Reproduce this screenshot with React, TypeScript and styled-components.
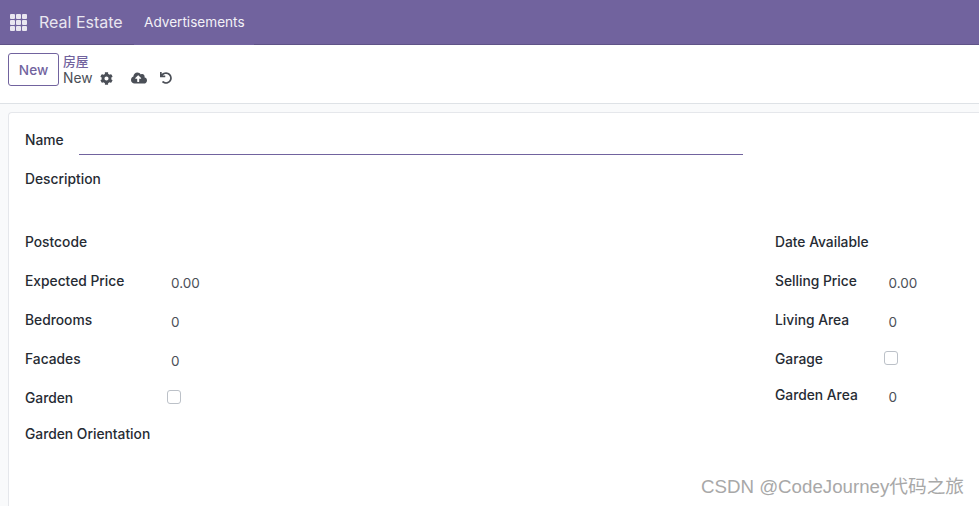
import React from "react";
import styled, { createGlobalStyle } from "styled-components";
import { FaCog, FaCloudUploadAlt, FaUndo } from "react-icons/fa";

const Global = createGlobalStyle`
  html, body { margin: 0; padding: 0; height: 100%; background: #fff; }
  #root { height: 100%; }
  * { box-sizing: border-box; }
  body { font-family: Inter, "Liberation Sans", "Noto Sans CJK SC", sans-serif; color: #374151; overflow: hidden; }
`;

const Page = styled.div`
  width: 979px;
  height: 506px;
  position: relative;
  overflow: hidden;
  display: flex;
  flex-direction: column;
  background: #f9fafb;
`;

const NavBar = styled.header`
  height: 45px;
  flex: none;
  background: #71639e;
  border-bottom: 1px solid #5f5387;
  display: flex;
  align-items: center;
  padding-left: 10px;
  color: #fff;
`;

const AppsGrid = styled.span`
  width: 17px;
  height: 17px;
  display: grid;
  grid-template-columns: repeat(3, 5px);
  grid-auto-rows: 5px;
  gap: 1px;
  i { background: #e9e6f0; border-radius: 1px; }
`;

const Brand = styled.span`
  margin-left: 12px;
  font-size: 16px;
  color: #e9e6f0;
  width: 95px;
`;

const MenuItem = styled.span`
  height: 45px;
  align-self: flex-start;
  width: 120px;
  padding-left: 10px;
  display: flex;
  align-items: center;
  padding-bottom: 1px;
  font-size: 13.6px;
  color: #f3f1f7;
  background: #71639e;
`;

const ControlPanel = styled.section`
  height: 59px;
  flex: none;
  background: #fff;
  border-bottom: 1px solid #dee2e6;
  display: flex;
  padding: 8px 0 0 8px;
`;

const NewButton = styled.button`
  width: 51px;
  height: 33px;
  border: 1px solid #71639e;
  border-radius: 3px;
  background: #fff;
  color: #71639e;
  font: 500 13.6px Inter, "Liberation Sans", sans-serif;
  padding: 0;
`;

const Crumbs = styled.div`
  margin-left: 4px;
  display: flex;
  flex-direction: column;
  font-size: 13.8px;
  line-height: 16px;
`;

const CrumbLink = styled.span`
  color: #71639e;
  font-family: "Noto Sans CJK SC", sans-serif;
  font-size: 12.8px;
  line-height: 16px;
  font-weight: 500;
`;

const CrumbRow = styled.div`
  display: flex;
  align-items: center;
  color: #4b4f57;
  margin-top: 1px;
`;

const IconSlot = styled.span<{ $left: number; $lift?: number }>`
  margin-left: ${(p) => p.$left}px;
  margin-top: ${(p) => -(p.$lift ?? 0)}px;
  display: inline-flex;
  color: #4b4f57;
`;

const Sheet = styled.main`
  flex: 1;
  margin: 8px 0 0 8px;
  background: #fff;
  border: 1px solid #e5e7eb;
  border-right: none;
  border-bottom: none;
  border-radius: 4px 0 0 0;
  padding: 17px 0 0 16px;
  font-size: 13.8px;
`;

const NameRow = styled.div`
  display: flex;
  align-items: flex-start;
  height: 39px;
`;

const NameUnderline = styled.div`
  width: 664px;
  height: 25px;
  margin-left: 16px;
  border-bottom: 1px solid #71639e;
`;

const Label = styled.span`
  font-weight: 500;
  color: #262b33;
  line-height: 20px;
  display: block;
`;

const NameLabel = styled(Label)`
  width: 38px;
  white-space: nowrap;
`;

const DescriptionRow = styled.div`
  height: 63px;
`;

const Columns = styled.div`
  display: flex;
`;

const LeftGroup = styled.div`
  width: 750px;
`;

const RightGroup = styled.div`
  flex: 1;
`;

const Row = styled.div<{ $height?: number; $labelWidth: number }>`
  display: grid;
  grid-template-columns: ${(p) => p.$labelWidth}px 1fr;
  height: ${(p) => p.$height ?? 39}px;
  align-items: start;
`;

const Value = styled.span`
  color: #4b4f57;
  font-size: 13.5px;
  line-height: 20px;
  margin-top: 2px;
`;

const CheckBox = styled.span<{ $offset: number }>`
  display: block;
  width: 14px;
  height: 14px;
  margin-left: ${(p) => p.$offset}px;
  margin-top: 2px;
  border: 1px solid #bcc1c8;
  border-radius: 3px;
  background: #fff;
`;

const Watermark = styled.span`
  position: absolute;
  left: 701px;
  top: 475px;
  font-family: "Liberation Sans", "Noto Sans CJK SC", sans-serif;
  font-size: 18.7px;
  line-height: 24px;
  color: #a8a8a8;
  white-space: nowrap;
`;

const LEFT = 146;
const RIGHT = 113.5;

export default function App() {
  return (
    <Page>
      <Global />
      <NavBar>
        <AppsGrid>
          {Array.from({ length: 9 }, (_, i) => (
            <i key={i} />
          ))}
        </AppsGrid>
        <Brand>Real Estate</Brand>
        <MenuItem>Advertisements</MenuItem>
      </NavBar>
      <ControlPanel>
        <NewButton>New</NewButton>
        <Crumbs>
          <CrumbLink>房屋</CrumbLink>
          <CrumbRow>
            New
            <IconSlot $left={8}><FaCog size={13} /></IconSlot>
            <IconSlot $left={18} $lift={1}><FaCloudUploadAlt size={16} /></IconSlot>
            <IconSlot $left={13}><FaUndo size={12} /></IconSlot>
          </CrumbRow>
        </Crumbs>
      </ControlPanel>
      <Sheet>
        <NameRow>
          <NameLabel>Name</NameLabel>
          <NameUnderline />
        </NameRow>
        <DescriptionRow>
          <Label>Description</Label>
        </DescriptionRow>
        <Columns>
          <LeftGroup>
            <Row $labelWidth={LEFT}><Label>Postcode</Label></Row>
            <Row $labelWidth={LEFT}><Label>Expected Price</Label><Value>0.00</Value></Row>
            <Row $labelWidth={LEFT}><Label>Bedrooms</Label><Value>0</Value></Row>
            <Row $labelWidth={LEFT}><Label>Facades</Label><Value>0</Value></Row>
            <Row $labelWidth={LEFT} $height={36}><Label>Garden</Label><CheckBox $offset={-4} /></Row>
            <Row $labelWidth={LEFT}><Label>Garden Orientation</Label></Row>
          </LeftGroup>
          <RightGroup>
            <Row $labelWidth={RIGHT}><Label>Date Available</Label></Row>
            <Row $labelWidth={RIGHT}><Label>Selling Price</Label><Value>0.00</Value></Row>
            <Row $labelWidth={RIGHT}><Label>Living Area</Label><Value>0</Value></Row>
            <Row $labelWidth={RIGHT} $height={36}><Label>Garage</Label><CheckBox $offset={-5} /></Row>
            <Row $labelWidth={RIGHT}><Label>Garden Area</Label><Value>0</Value></Row>
          </RightGroup>
        </Columns>
      </Sheet>
      <Watermark>CSDN @CodeJourney代码之旅</Watermark>
    </Page>
  );
}
